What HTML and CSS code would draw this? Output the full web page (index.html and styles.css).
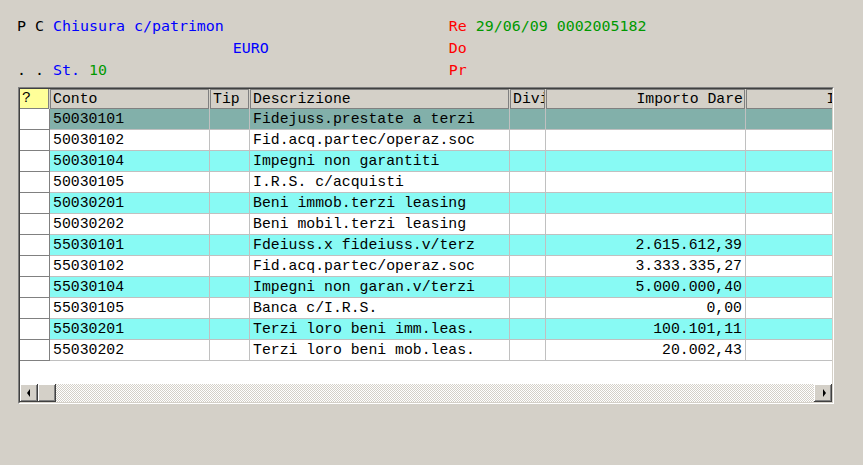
FILE: index.html
```html
<!DOCTYPE html>
<html>
<head>
<meta charset="utf-8">
<link rel="stylesheet" href="styles.css">
</head>
<body>
<div class="info">
<div class="line"><span class="k">P C </span><span class="b">Chiusura c/patrimon</span>                         <span class="r">Re</span> <span class="g">29/06/09 0002005182</span></div>
<div class="line">                        <span class="b">EURO</span>                    <span class="r">Do</span></div>
<div class="line"><span class="k">. . </span><span class="b">St.</span> <span class="g">10</span>                                      <span class="r">Pr</span></div>
</div>
<div class="grid-box">
  <div class="viewport">
    <div class="row head">
      <div class="hc q">?</div>
      <div class="hc">Conto</div>
      <div class="hc">Tip</div>
      <div class="hc">Descrizione</div>
      <div class="hc">Divi</div>
      <div class="hc num">Importo Dare</div>
      <div class="hc num">Importo Avere</div>
    </div>
    <div class="row sel"><div class="c ind"></div><div class="c">50030101</div><div class="c"></div><div class="c">Fidejuss.prestate a terzi</div><div class="c"></div><div class="c num"></div><div class="c"></div></div>
    <div class="row w"><div class="c ind"></div><div class="c">50030102</div><div class="c"></div><div class="c">Fid.acq.partec/operaz.soc</div><div class="c"></div><div class="c num"></div><div class="c"></div></div>
    <div class="row cy"><div class="c ind"></div><div class="c">50030104</div><div class="c"></div><div class="c">Impegni non garantiti</div><div class="c"></div><div class="c num"></div><div class="c"></div></div>
    <div class="row w"><div class="c ind"></div><div class="c">50030105</div><div class="c"></div><div class="c">I.R.S. c/acquisti</div><div class="c"></div><div class="c num"></div><div class="c"></div></div>
    <div class="row cy"><div class="c ind"></div><div class="c">50030201</div><div class="c"></div><div class="c">Beni immob.terzi leasing</div><div class="c"></div><div class="c num"></div><div class="c"></div></div>
    <div class="row w"><div class="c ind"></div><div class="c">50030202</div><div class="c"></div><div class="c">Beni mobil.terzi leasing</div><div class="c"></div><div class="c num"></div><div class="c"></div></div>
    <div class="row cy"><div class="c ind"></div><div class="c">55030101</div><div class="c"></div><div class="c">Fdeiuss.x fideiuss.v/terz</div><div class="c"></div><div class="c num">2.615.612,39</div><div class="c"></div></div>
    <div class="row w"><div class="c ind"></div><div class="c">55030102</div><div class="c"></div><div class="c">Fid.acq.partec/operaz.soc</div><div class="c"></div><div class="c num">3.333.335,27</div><div class="c"></div></div>
    <div class="row cy"><div class="c ind"></div><div class="c">55030104</div><div class="c"></div><div class="c">Impegni non garan.v/terzi</div><div class="c"></div><div class="c num">5.000.000,40</div><div class="c"></div></div>
    <div class="row w"><div class="c ind"></div><div class="c">55030105</div><div class="c"></div><div class="c">Banca c/I.R.S.</div><div class="c"></div><div class="c num">0,00</div><div class="c"></div></div>
    <div class="row cy"><div class="c ind"></div><div class="c">55030201</div><div class="c"></div><div class="c">Terzi loro beni imm.leas.</div><div class="c"></div><div class="c num">100.101,11</div><div class="c"></div></div>
    <div class="row w"><div class="c ind"></div><div class="c">55030202</div><div class="c"></div><div class="c">Terzi loro beni mob.leas.</div><div class="c"></div><div class="c num">20.002,43</div><div class="c"></div></div>
    <div class="empty"></div>
    <div class="hscroll">
      <div class="btn"><span class="arr left"></span></div>
      <div class="btn thumb"></div>
      <div class="track"></div>
      <div class="btn"><span class="arr right"></span></div>
    </div>
  </div>
</div>
</body>
</html>
```
FILE: styles.css
```css
html, body {
  margin: 0;
  padding: 0;
  background: #d4d0c8;
}
body {
  width: 863px;
  height: 465px;
  overflow: hidden;
}
.info {
  padding: 15px 0 0 17px;
  font-family: "DejaVu Sans Mono", monospace;
  font-size: 14.95px;
  height: 72px;
}
.line {
  white-space: pre;
  line-height: 22px;
  height: 22px;
}
.k { color: #000; }
.b { color: #0000ff; }
.r { color: #ff0000; }
.g { color: #009900; }

.grid-box {
  margin-left: 18px;
  width: 816px;
  height: 317px;
  box-sizing: border-box;
  border-top: 1px solid #808080;
  border-left: 1px solid #808080;
  border-right: 1px solid #ffffff;
  border-bottom: 1px solid #ffffff;
}
.viewport {
  height: 315px;
  box-sizing: border-box;
  border-top: 1px solid #404040;
  border-left: 1px solid #404040;
  border-right: 1px solid #d4d0c8;
  border-bottom: 1px solid #d4d0c8;
  background: #ffffff;
  overflow: hidden;
  font-family: "Courier New", "Nimbus Mono PS", "FreeMono", "Liberation Mono", monospace;
  font-size: 14.8px;
  color: #000;
}
.row {
  display: grid;
  grid-template-columns: 30px 160px 40px 260px 36px 200px 199px;
  width: 925px;
}
.row.head {
  height: 20px;
  background: #d4d0c8;
}
.hc {
  box-sizing: border-box;
  height: 20px;
  line-height: 18px;
  padding: 0 2px 0 2px;
  border: 1px solid #808080;
  margin-right: 1px;
  white-space: pre;
  overflow: hidden;
}
.hc.q {
  background: #ffff99;
  border-left: none;
  border-top: none;
  padding-left: 2px;
  line-height: 19px;
}
.hc.num { text-align: right; padding-right: 1px; }

.c {
  box-sizing: border-box;
  height: 21px;
  line-height: 21px;
  padding: 0 3px;
  border-right: 1px solid #c0c0c0;
  border-bottom: 1px solid #c0c0c0;
  white-space: pre;
  overflow: hidden;
}
.c.num { text-align: right; }
.c.ind {
  background: #ffffff;
  border-right: 1px solid #808080;
  border-bottom: 1px solid #808080;
}
.row.sel .c { background: #82b0aa; }
.row.cy .c { background: #88faf4; }
.row.w .c { background: #ffffff; }
.row .c.ind { background: #ffffff; }

.empty {
  height: 23px;
}
.hscroll {
  display: flex;
  height: 18px;
  width: 812px;
}
.btn {
  width: 18px;
  height: 18px;
  flex: none;
  box-sizing: border-box;
  background: #d4d0c8;
  box-shadow: inset -1px -1px #404040, inset 1px 1px #ffffff, inset -2px -2px #808080, inset 2px 2px #d4d0c8;
  display: flex;
  align-items: center;
  justify-content: center;
}
.track {
  flex: 1;
  background: repeating-conic-gradient(#ffffff 0 25%, #d4d0c8 0 50%) 0 0 / 2px 2px;
}
.arr {
  width: 0;
  height: 0;
  border-top: 4px solid transparent;
  border-bottom: 4px solid transparent;
}
.arr.left { border-right: 3px solid #000; margin-right: 2px; }
.arr.right { border-left: 3px solid #000; margin-left: 2px; }
```
